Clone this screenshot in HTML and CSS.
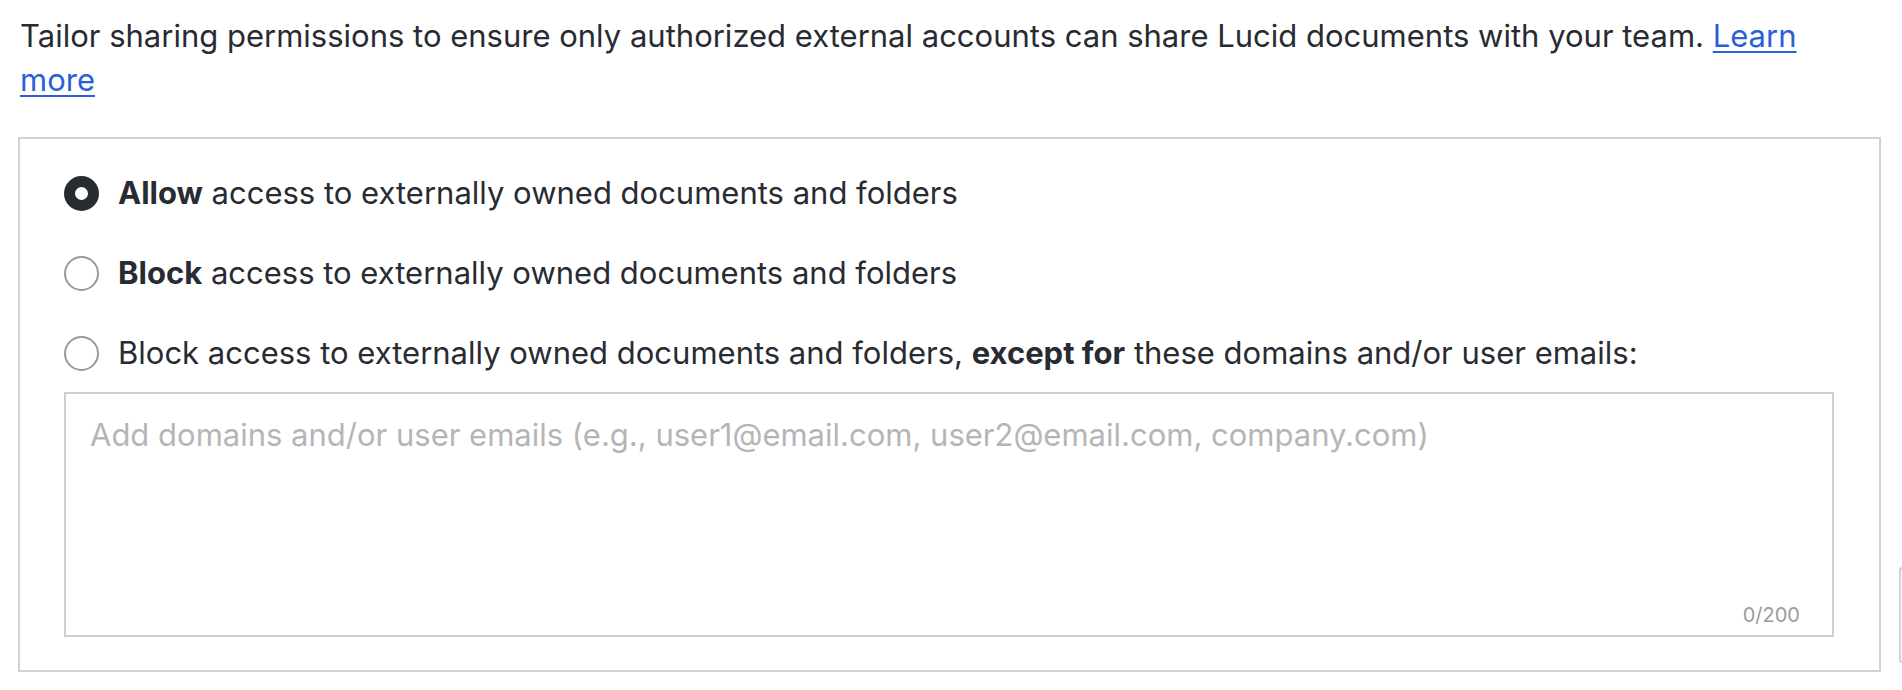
FILE: index.html
```html
<!DOCTYPE html>
<html lang="en">
<head>
<meta charset="utf-8">
<title>External sharing permissions</title>
<link rel="stylesheet" href="styles.css">
</head>
<body>
<div class="page">
  <main class="main">
    <p class="intro">Tailor sharing permissions to ensure only authorized external accounts can share Lucid documents with your team. <a href="#" class="link">Learn more</a></p>
    <section class="panel">
      <div class="options">
        <label class="option">
          <span class="radio radio-on"></span>
          <span class="label"><b>Allow</b> access to externally owned documents and folders</span>
        </label>
        <label class="option">
          <span class="radio"></span>
          <span class="label"><b>Block</b> access to externally owned documents and folders</span>
        </label>
        <label class="option">
          <span class="radio"></span>
          <span class="label">Block access to externally owned documents and folders, <b>except for</b> these domains and/or user emails:</span>
        </label>
      </div>
      <div class="field">
        <textarea class="input" placeholder="Add domains and/or user emails (e.g., user1@email.com, user2@email.com, company.com)"></textarea>
        <div class="count">0/200</div>
      </div>
    </section>
  </main>
  <div class="side"></div>
</div>
</body>
</html>
```
FILE: styles.css
```css
html, body {
  margin: 0;
  padding: 0;
  background: #ffffff;
}
body {
  font-family: "Inter", "Liberation Sans", sans-serif;
  color: #282b32;
}
.page {
  display: flex;
  align-items: flex-start;
  gap: 18px;
  padding-left: 18px;
  width: 1902px;
  box-sizing: border-box;
}
.main {
  width: 1863px;
  flex: none;
}
.intro {
  margin: 14px 0 0 0;
  padding: 0 40px 0 2px;
  font-size: 31px;
  line-height: 44px;
}
.link {
  color: #2b5fd6;
  text-decoration: underline;
  text-underline-offset: 4px;
  text-decoration-thickness: 2px;
}
.panel {
  margin-top: 35px;
  border: 2px solid #d2d2d6;
  padding: 32px 45px 33px 44px;
}
.options {
  display: flex;
  flex-direction: column;
  gap: 36px;
}
.option {
  display: flex;
  align-items: center;
  gap: 19px;
  font-size: 31px;
  line-height: 44px;
}
.option b {
  font-weight: 700;
}
.radio {
  flex: none;
  width: 35px;
  height: 35px;
  box-sizing: border-box;
  border-radius: 50%;
  border: 2px solid #9a9a9e;
  background: #ffffff;
}
.radio-on {
  border: 11px solid #282b32;
  background: #ffffff;
}
.field {
  margin-top: 17px;
  height: 245px;
  box-sizing: border-box;
  border: 2px solid #cfcfd2;
  display: flex;
  flex-direction: column;
}
.input {
  flex: 1;
  border: none;
  outline: none;
  resize: none;
  padding: 19px 24px 0 24px;
  font-family: "Inter", "Liberation Sans", sans-serif;
  font-size: 31px;
  line-height: 44px;
  color: #282b32;
  background: transparent;
}
.input::placeholder {
  color: #b5b5b8;
}
.count {
  align-self: flex-end;
  padding: 0 32px 8px 0;
  font-size: 20px;
  line-height: 24px;
  color: #9b9b9e;
}
.side {
  flex: none;
  width: 3px;
  height: 96px;
  margin-top: 567px;
  box-sizing: border-box;
  border: 2px solid #d2d2d6;
  border-right: none;
  border-radius: 10px 0 0 10px;
}
```
